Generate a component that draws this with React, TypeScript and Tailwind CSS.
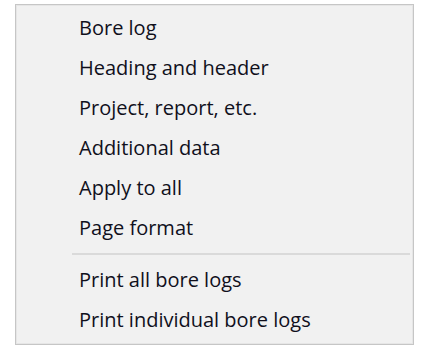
import React from "react";

const groups = [
  ["Bore log", "Heading and header", "Project, report, etc.", "Additional data", "Apply to all", "Page format"],
  ["Print all bore logs", "Print individual bore logs"],
];

function Item({ label }: { label: string }) {
  return (
    <div className="flex h-[40px] items-center">
      <div className="w-[56px] self-stretch shrink-0" />
      <span className="pl-[7px] text-[20px] font-medium leading-[40px] text-[#10101c]">{label}</span>
    </div>
  );
}

export default function App() {
  return (
    <div className="w-[445px] h-[363px] bg-white pt-[4px] pl-[15px]" style={{ fontFamily: '"Open Sans", "Noto Sans", sans-serif' }}>
      <div className="w-[399px] h-[341px] border border-[#c6c6c6] bg-[#f1f1f1] shadow-[inset_0_0_0_1px_#e6e6e6] pt-[3px]">
        {groups[0].map((l) => (
          <Item key={l} label={l} />
        ))}
        <div className="flex h-[12px] items-center">
          <div className="w-[56px] shrink-0" />
          <div className="h-[2px] w-[338px] bg-[#dadada]" />
        </div>
        {groups[1].map((l) => (
          <Item key={l} label={l} />
        ))}
      </div>
    </div>
  );
}
